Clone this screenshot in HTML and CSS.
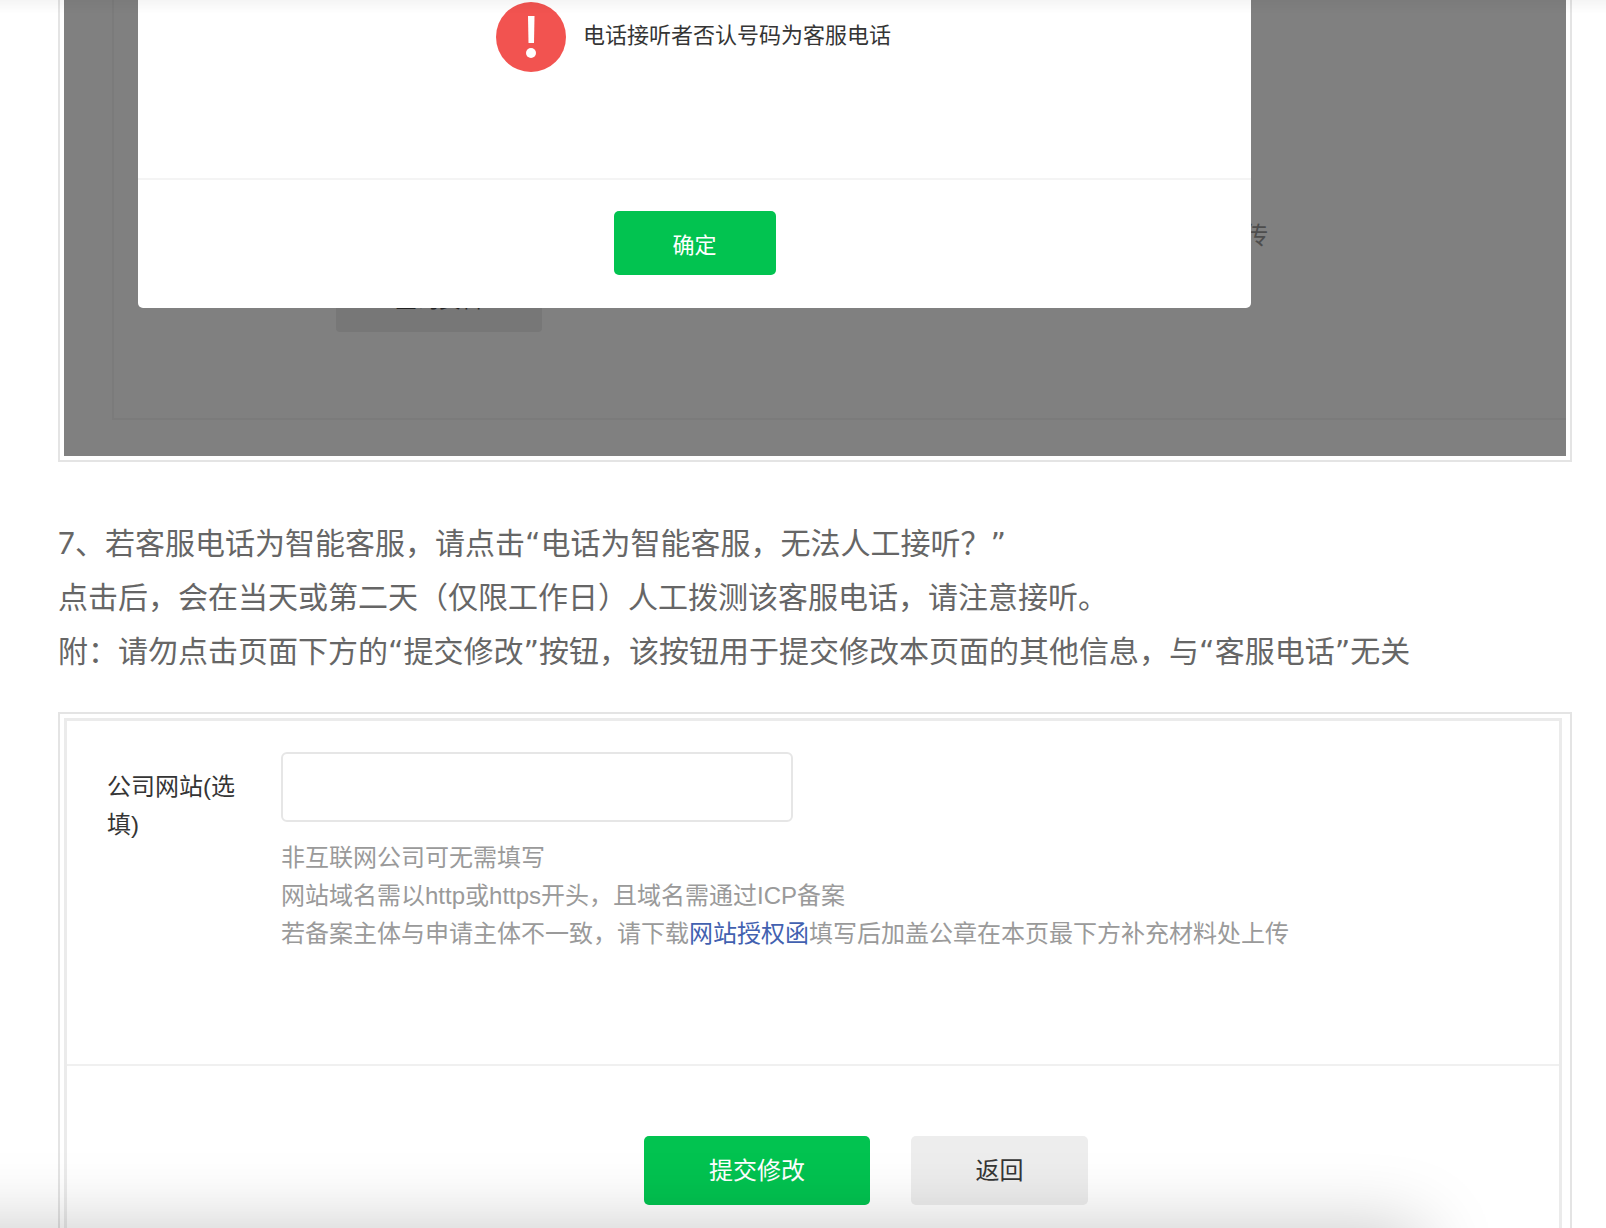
FILE: index.html
```html
<!DOCTYPE html>
<html lang="zh-CN">
<head>
  <meta charset="UTF-8">
  <meta name="viewport" content="width=device-width, initial-scale=1.0">
  <title>客服电话</title>
  <link rel="stylesheet" href="styles.css">
</head>
<body>
  <main class="article">
    <div class="frame frame-top">
      <div class="masked">
        <div class="behind-box"></div>
        <span class="behind-text">传</span>
        <button type="button" class="behind-btn">查询资料</button>
        <div class="dialog" role="dialog" aria-label="提示">
          <div class="dialog-body">
            <svg class="warn-icon" viewBox="0 0 70 70" aria-hidden="true">
              <circle cx="35" cy="35" r="35" fill="#f25350"/>
              <path d="M32 14h6.500l-.5 27h-5.500z" fill="#fff"/>
              <circle cx="35" cy="51" r="5" fill="#fff"/>
            </svg>
            <p>电话接听者否认号码为客服电话</p>
          </div>
          <div class="dialog-footer">
            <button type="button" class="btn btn-primary btn-confirm">确定</button>
          </div>
        </div>
      </div>
    </div>

    <p class="step">
      7、若客服电话为智能客服，请点击<span class="quote">“</span>电话为智能客服，无法人工接听？<span class="quote">”</span><br>
      点击后，会在当天或第二天（仅限工作日）人工拨测该客服电话，请注意接听。<br>
      附：请勿点击页面下方的<span class="quote">“</span>提交修改<span class="quote">”</span>按钮，该按钮用于提交修改本页面的其他信息，与<span class="quote">“</span>客服电话<span class="quote">”</span>无关
    </p>

    <div class="frame">
      <form class="panel">
        <div class="field">
          <label for="website">公司网站(选填)</label>
          <div class="control">
            <input type="text" id="website" name="website">
            <p class="tips">
              非互联网公司可无需填写<br>
              网站域名需以http或https开头，且域名需通过ICP备案<br>
              若备案主体与申请主体不一致，请下载<a href="#">网站授权函</a>填写后加盖公章在本页最下方补充材料处上传
            </p>
          </div>
        </div>
        <div class="actions">
          <button type="button" class="btn btn-primary btn-submit">提交修改</button>
          <button type="button" class="btn btn-default">返回</button>
        </div>
      </form>
    </div>
  </main>

  <div class="top-shade"></div>
  <div class="bottom-shade"></div>
</body>
</html>
```

FILE: styles.css
```css
* {
  box-sizing: border-box;
}
body {
  margin: 0;
  background: #fff;
  color: #666;
  font-family: "Liberation Sans", "Noto Sans CJK SC", sans-serif;
}
p {
  margin: 0;
}
.article {
  padding: 0 34px 0 58px;
}
.frame {
  border: 2px solid #e4e4e4;
  padding: 4px;
}
.frame-top {
  border-top: none;
  padding-top: 0;
}

/* screenshot with the dialog */
.masked {
  position: relative;
  padding: 0 315px 148px 74px;
  background: #808080;
  overflow: hidden;
}
.behind-box {
  position: absolute;
  top: 0;
  left: 48px;
  right: 0;
  bottom: 36px;
  border: 2px solid #7b7b7b;
  border-width: 0 0 2px 2px;
}
.behind-text {
  position: absolute;
  left: 1180px;
  top: 218px;
  font-size: 24px;
  line-height: 36px;
  color: #4d4d4d;
}
.behind-btn {
  position: absolute;
  left: 272px;
  bottom: 124px;
  width: 206px;
  height: 70px;
  border: none;
  border-radius: 4px;
  background: #777;
  color: #222;
  font: inherit;
  font-size: 22px;
}
.dialog {
  position: relative;
  background: #fff;
  border-radius: 0 0 5px 5px;
}
.dialog-body {
  display: flex;
  justify-content: center;
  align-items: flex-start;
  gap: 17px;
  height: 178px;
  padding: 2px 2px 0 0;
  color: #353535;
  font-size: 22px;
  line-height: 68px;
}
.warn-icon {
  width: 70px;
  height: 70px;
}
.dialog-footer {
  display: flex;
  justify-content: center;
  padding: 31px 0 33px;
  border-top: 2px solid #f4f4f4;
}

.btn {
  height: 69px;
  border: none;
  border-radius: 5px;
  font: inherit;
  font-size: 24px;
  cursor: pointer;
}
.btn-primary {
  background: #02c350;
  color: #fff;
}
.btn-default {
  width: 177px;
  background: #ededed;
  color: #353535;
}
.btn-confirm {
  width: 162px;
  height: 64px;
  font-size: 22px;
}
.btn-submit {
  width: 226px;
}

.step {
  margin: 54px 0 34px;
  font-family: Inter, "Noto Sans CJK SC", sans-serif;
  font-size: 30px;
  line-height: 54px;
}
.quote {
  font-family: "DejaVu Sans", sans-serif;
  line-height: 1;
}

/* screenshot with the form */
.panel {
  margin-right: 4px;
  border: 3px solid #ebebeb;
  border-bottom: none;
  font-size: 24px;
  line-height: 38px;
}
.field {
  display: flex;
  gap: 38px;
  min-height: 343px;
  padding: 31px 40px 0;
}
.field label {
  flex: none;
  width: 136px;
  padding-top: 16px;
  color: #353535;
}
.control {
  flex: 1;
}
.control input {
  display: block;
  width: 512px;
  max-width: 100%;
  height: 70px;
  padding: 0 16px;
  border: 2px solid #e6e6e6;
  border-radius: 6px;
  font: inherit;
}
.tips {
  margin-top: 17px;
  color: #9a9a9a;
}
.tips a {
  color: #4261b0;
  text-decoration: none;
}
.actions {
  display: flex;
  justify-content: center;
  gap: 41px;
  padding: 70px 0 80px 106px;
  border-top: 2px solid #f0f0f0;
}

.top-shade {
  position: fixed;
  top: 0;
  left: 0;
  right: 0;
  height: 14px;
  background: linear-gradient(rgba(0, 0, 0, 0.04), rgba(0, 0, 0, 0));
  pointer-events: none;
}
.bottom-shade {
  position: fixed;
  top: 100%;
  left: -100px;
  right: 184px;
  height: 200px;
  box-shadow: 0 0 74px rgba(0, 0, 0, 0.22);
  pointer-events: none;
}
```
